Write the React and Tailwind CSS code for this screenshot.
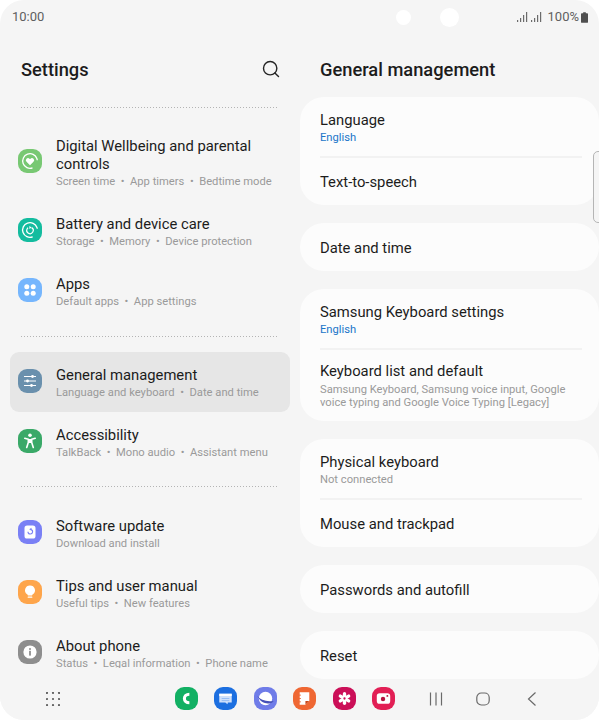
import { Search } from "lucide-react";

const Dotted = () => (
    <div className="mx-[21px] h-px shrink-0 bg-[repeating-linear-gradient(90deg,#b4b4b4_0,#b4b4b4_1px,transparent_1px,transparent_3px)]" />
);

const Squircle = ({ bg, size = "w-6 h-6", round = "rounded-[9px]", children }) => (
    <div className={`${size} ${round} ${bg} shrink-0 flex items-center justify-center`}>
        <svg viewBox="0 0 24 24" className="w-full h-full">{children}</svg>
    </div>
);

const WellbeingIcon = () => (
    <Squircle bg="bg-[#78c873]">
        <circle cx="12" cy="12" r="7.3" fill="none" stroke="#fff" strokeWidth="1.3" strokeDasharray="36 10" transform="rotate(70 12 12)" />
        <path d="M12 16.2l-3.5-3.5a2.1 2.1 0 0 1 3-3l.5.5.5-.5a2.1 2.1 0 0 1 3 3z" fill="#fff" />
    </Squircle>
);

const BatteryIcon = () => (
    <Squircle bg="bg-[#14bc9f]">
        <circle cx="12" cy="12" r="7.4" fill="none" stroke="#fff" strokeWidth="1.3" strokeDasharray="36 10" transform="rotate(70 12 12)" />
        <circle cx="12" cy="12.4" r="3.2" fill="none" stroke="#fff" strokeWidth="1.2" strokeDasharray="16 4.1" transform="rotate(-60 12 12.4)" />
        <path d="M11.4 7.9v3l2.1-1.500z" fill="#fff" />
    </Squircle>
);

const AppsIcon = () => (
    <Squircle bg="bg-[#76b6fd]">
        <circle cx="8.8" cy="8.8" r="2.5" fill="#fff" />
        <circle cx="15.2" cy="8.8" r="2.5" fill="#fff" />
        <circle cx="8.8" cy="15.2" r="2.5" fill="#fff" />
        <circle cx="15.2" cy="15.2" r="2.5" fill="#fff" />
    </Squircle>
);

const GeneralIcon = () => (
    <Squircle bg="bg-[#6a90ad]">
        <path d="M6 7.5h12M6 12h12M6 16.5h12" stroke="#fff" strokeWidth="1" />
        <circle cx="14.5" cy="7.5" r="1.4" fill="#fff" />
        <circle cx="9.5" cy="12" r="1.4" fill="#fff" />
        <circle cx="13.5" cy="16.5" r="1.4" fill="#fff" />
    </Squircle>
);

const AccessIcon = () => (
    <Squircle bg="bg-[#3aa968]">
        <circle cx="12" cy="6.3" r="1.8" fill="#fff" />
        <path d="M6.8 9.3l3.5 1v3.3l-1.6 4.9M17.2 9.3l-3.5 1v3.3l1.6 4.9" stroke="#fff" strokeWidth="1.6" fill="none" strokeLinecap="round" strokeLinejoin="round" />
        <path d="M10.3 10h3.4v4h-3.4z" fill="#fff" />
    </Squircle>
);

const UpdateIcon = () => (
    <Squircle bg="bg-[#7a80f5]">
        <rect x="6.5" y="5.5" width="11" height="13" rx="2.6" fill="#fff" />
        <path d="M10 11.7a2.3 2.3 0 1 0 2.8-2.2" fill="none" stroke="#7a80f5" strokeWidth="1.1" />
        <path d="M13.5 7.8v3l-2.3-1.5z" fill="#7a80f5" />
    </Squircle>
);

const TipsIcon = () => (
    <Squircle bg="bg-[#fea54b]">
        <path d="M12 5.4a4.9 4.9 0 0 1 2.9 8.9c-.5.4-.7.8-.8 1.3H9.9c-.1-.5-.3-.9-.8-1.3A4.9 4.9 0 0 1 12 5.4z" fill="#fff" />
        <path d="M10.2 17.2h3.6" stroke="#fff" strokeWidth="1.2" strokeLinecap="round" />
    </Squircle>
);

const AboutIcon = () => (
    <Squircle bg="bg-[#8e8e8e]">
        <circle cx="12" cy="12" r="6.6" fill="#fff" />
        <circle cx="12" cy="8.9" r="1" fill="#8e8e8e" />
        <rect x="11.1" y="10.8" width="1.8" height="4.8" fill="#8e8e8e" />
    </Squircle>
);

const MenuRow = ({ icon, title, sub, selected, h = "h-[60px]" }) => (
    <div className={`${h} shrink-0 mx-2.5 pl-2 pr-2 flex items-center gap-3.5 rounded-[9px] ${selected ? "bg-[#e6e6e6]" : ""}`}>
        <div className="-mt-[2px]">{icon}</div>
        <div className="min-w-0 pt-[3px]">
            <div className="text-[14.8px] leading-[18px] text-[#1c1c1c]">{title}</div>
            <div className="text-[11.2px] leading-[17px] text-[#9a9a9a] whitespace-pre">{sub}</div>
        </div>
    </div>
);

const Card = ({ children }) => (
    <div className="shrink-0 rounded-[24px] bg-[#fcfcfc] mb-[18px]">{children}</div>
);

const Item = ({ title, sub, accent, h = "h-12 pt-[2px]" }) => (
    <div className={`${h} px-5 flex flex-col justify-center`}>
        <div className="text-[14.8px] leading-[18px] text-[#1c1c1c]">{title}</div>
        {sub && <div className={`text-[11.2px] leading-[13px] mt-[2px] ${accent ? "text-[#1a75c9]" : "text-[#9a9a9a]"}`}>{sub}</div>}
    </div>
);

const Rule = () => <div className="ml-5 mr-[17px] h-0.5 bg-[#f2f2f2]" />;

const Signal = () => (
    <svg viewBox="0 0 12 10" className="w-3 h-2.5" fill="#6b6b6b">
        <rect x="0" y="8" width="1.2" height="2" />
        <rect x="3" y="6" width="1.2" height="4" />
        <rect x="6" y="3" width="1.2" height="7" />
        <rect x="9" y="0" width="1.2" height="10" />
    </svg>
);

const Dock = () => (
    <div className="flex gap-[16.4px]">
        <Squircle bg="bg-[#12b063]" size="w-[23px] h-[23px]">
            <path d="M15 7.5c-3.2 0-5.2 2-5.2 4.5s2 4.5 5.2 4.5" fill="none" stroke="#fff" strokeWidth="3.2" />
        </Squircle>
        <Squircle bg="bg-[#1c6fe0]" size="w-[23px] h-[23px]">
            <path d="M5.5 7h13v9.2h-4l-.5 1.800-2.200-1.800H5.500z" fill="#cfe1fb" />
            <path d="M5.5 7h13v2.4h-13z" fill="#fff" />
            <path d="M8 12h8M8 14.2h8" stroke="#8fb8f2" strokeWidth=".9" />
        </Squircle>
        <Squircle bg="bg-[#6f7ce8]" size="w-[23px] h-[23px]">
            <circle cx="12" cy="12" r="7" fill="#fff" />
            <path d="M3.5 9.5c3 4 10 6.5 17 5-3 4.5-13 4-17-5z" fill="#4651b8" />
        </Squircle>
        <Squircle bg="bg-[#ef6733]" size="w-[23px] h-[23px]">
            <path d="M7 5.5h10v9l-4 4H7z" fill="#fff" />
            <path d="M13 18.5v-4h4z" fill="#c8481b" />
            <path d="M5.8 8.5h2.4M5.8 12h2.4M5.8 15.5h2.4" stroke="#ef6733" strokeWidth="1" />
        </Squircle>
        <Squircle bg="bg-[#cb0f58]" size="w-[23px] h-[23px]">
            <g stroke="#fff" strokeWidth="3.5" strokeLinecap="round">
                <path d="M12 7v10" />
                <path d="M7.67 9.5l8.66 5" />
                <path d="M16.33 9.5l-8.66 5" />
            </g>
            <circle cx="12" cy="12" r="1.2" fill="#cb0f58" />
        </Squircle>
        <Squircle bg="bg-[#e21f55]" size="w-[23px] h-[23px]">
            <rect x="5" y="6.5" width="14" height="11" rx="3" fill="#fff" />
            <circle cx="11.5" cy="12.5" r="2.3" fill="#b5123f" />
            <circle cx="16" cy="9.3" r="1" fill="#b5123f" />
        </Squircle>
    </div>
);

const App = () => {
    return (
        <div className="w-[599px] h-[720px] bg-white overflow-hidden font-['Roboto',sans-serif]">
            <div className="relative w-full h-full rounded-[24px] bg-[#f5f5f5] flex flex-col overflow-hidden">
                {/* status bar */}
                <div className="h-[34px] shrink-0 pl-3 pr-[11px] flex items-center justify-between text-[13px] text-[#5f5f5f]">
                    <span>10:00</span>
                    <div className="flex items-center gap-[2px]">
                        <Signal />
                        <Signal />
                        <span className="ml-[3px]">100%</span>
                        <svg viewBox="0 0 8 12" className="w-[7px] h-[11px]" fill="#4f4f4f">
                            <path d="M2.5 0h3v1H7a1 1 0 0 1 1 1v9a1 1 0 0 1-1 1H1a1 1 0 0 1-1-1V2a1 1 0 0 1 1-1h1.5z" />
                        </svg>
                    </div>
                </div>

                {/* camera cutouts */}
                <div className="absolute top-[10px] left-[396px] w-[15px] h-[15px] rounded-full bg-white" />
                <div className="absolute top-2 left-[440px] w-[19px] h-[19px] rounded-full bg-white" />
                {/* edge panel handle */}
                <div className="absolute top-[151px] left-[593px] w-2 h-[72px] rounded-l-[5px] border border-[#b5b5b5] bg-[#f5f5f5]" />

                <div className="flex-1 min-h-0 flex">
                    {/* left list */}
                    <div className="w-[300px] h-[634px] shrink-0 flex flex-col overflow-hidden">
                        <div className="h-[73px] shrink-0 pl-[21px] pr-[19px] pb-[2px] flex items-center justify-between">
                            <span className="text-[18.3px] font-medium text-[#1c1c1c]">Settings</span>
                            <Search size={20} strokeWidth={1.7} className="text-[#252525] -mt-[2px]" />
                        </div>
                        <Dotted />
                        <div className="h-4 shrink-0" />
                        <MenuRow h="h-[77px] pb-[2px]" icon={<WellbeingIcon />} title="Digital Wellbeing and parental controls" sub="Screen time  •  App timers  •  Bedtime mode" />
                        <MenuRow icon={<BatteryIcon />} title="Battery and device care" sub="Storage  •  Memory  •  Device protection" />
                        <MenuRow icon={<AppsIcon />} title="Apps" sub="Default apps  •  App settings" />
                        <div className="h-[15px] shrink-0" />
                        <Dotted />
                        <div className="h-[15px] shrink-0" />
                        <MenuRow selected icon={<GeneralIcon />} title="General management" sub="Language and keyboard  •  Date and time" />
                        <MenuRow icon={<AccessIcon />} title="Accessibility" sub="TalkBack  •  Mono audio  •  Assistant menu" />
                        <div className="h-3.5 shrink-0" />
                        <Dotted />
                        <div className="h-4 shrink-0" />
                        <MenuRow icon={<UpdateIcon />} title="Software update" sub="Download and install" />
                        <MenuRow icon={<TipsIcon />} title="Tips and user manual" sub="Useful tips  •  New features" />
                        <MenuRow icon={<AboutIcon />} title="About phone" sub="Status  •  Legal information  •  Phone name" />
                    </div>

                    {/* right detail */}
                    <div className="flex-1 min-w-0 flex flex-col overflow-hidden">
                        <div className="h-[63px] shrink-0 pl-5 pt-[9px] flex items-center">
                            <span className="text-[18.3px] font-medium text-[#1c1c1c]">General management</span>
                        </div>
                        <Card>
                            <Item title="Language" sub="English" accent h="h-[59px] pt-px" />
                            <Rule />
                            <Item title="Text-to-speech" h="h-[47px]" />
                        </Card>
                        <Card>
                            <Item title="Date and time" />
                        </Card>
                        <Card>
                            <Item title="Samsung Keyboard settings" sub="English" accent h="h-[59px] pt-px" />
                            <Rule />
                            <div className="h-[71px] px-5 pb-px flex flex-col justify-center">
                                <div className="text-[14.8px] leading-[18px] text-[#1c1c1c]">Keyboard list and default</div>
                                <div className="text-[11.2px] leading-[13px] mt-[3px] text-[#9a9a9a]">Samsung Keyboard, Samsung voice input, Google voice typing and Google Voice Typing [Legacy]</div>
                            </div>
                        </Card>
                        <Card>
                            <Item title="Physical keyboard" sub="Not connected" h="h-[59px] pt-px" />
                            <Rule />
                            <Item title="Mouse and trackpad" h="h-[47px]" />
                        </Card>
                        <Card>
                            <Item title="Passwords and autofill" />
                        </Card>
                        <Card>
                            <Item title="Reset" />
                        </Card>
                    </div>
                </div>

                {/* nav bar */}
                <div className="absolute left-0 right-0 bottom-0 h-[41px] pb-[2px] bg-[#f5f5f5] flex items-center pl-[46px]">
                    <svg viewBox="0 0 14 14" className="w-3.5 h-3.5" fill="#5c5c5c">
                        {[1, 7, 13].map((y) => [1, 7, 13].map((x) => <circle key={`${x}-${y}`} cx={x} cy={y} r="1.1" />))}
                    </svg>
                    <div className="ml-[115px]"><Dock /></div>
                    <div className="ml-[34px] flex items-center">
                        <svg viewBox="0 0 14 14" className="w-3.5 h-3.5" fill="none" stroke="#6a6a6a" strokeWidth="1.2">
                            <path d="M1.5 0.5v13M7 0.5v13M12.5 0.5v13" />
                        </svg>
                        <svg viewBox="0 0 14 14" className="w-3.5 h-3.5 ml-[33px]" fill="none" stroke="#6a6a6a" strokeWidth="1.2">
                            <rect x="0.8" y="1" width="12.4" height="12" rx="4.5" />
                        </svg>
                        <svg viewBox="0 0 10 14" className="w-2.5 h-3.5 ml-[37px]" fill="none" stroke="#6a6a6a" strokeWidth="1.2">
                            <path d="M8.5 0.5L1.5 7l7 6.5" />
                        </svg>
                    </div>
                </div>
            </div>
        </div>
    );
};

export default App;
